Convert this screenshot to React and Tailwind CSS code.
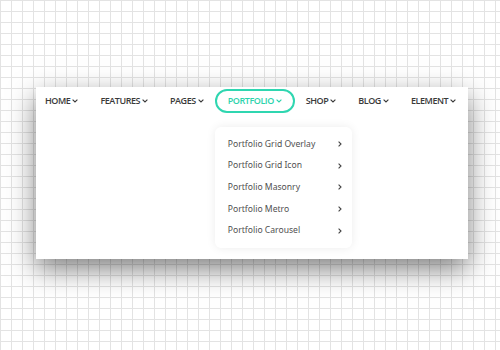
import React from "react";

const Down = ({ color = "#3a3a3a" }) => (
  <svg width="6" height="4" viewBox="0 0 6 4" className="ml-[2px] mt-[1px]">
    <path d="M0.6 0.6 L3 3 L5.4 0.6" fill="none" stroke={color} strokeWidth="1.1" />
  </svg>
);

const Right = () => (
  <svg width="4" height="6" viewBox="0 0 4 6">
    <path d="M0.6 0.6 L3 3 L0.6 5.4" fill="none" stroke="#444" strokeWidth="1.1" />
  </svg>
);

const items = ["HOME", "FEATURES", "PAGES", "PORTFOLIO", "SHOP", "BLOG", "ELEMENT"];
const sub = [
  "Portfolio Grid Overlay",
  "Portfolio Grid Icon",
  "Portfolio Masonry",
  "Portfolio Metro",
  "Portfolio Carousel",
];

export default function App() {
  return (
    <div className="w-[500px] h-[350px] overflow-hidden bg-white bg-[linear-gradient(to_right,#e3e3e3_1px,transparent_1px),linear-gradient(to_bottom,#e3e3e3_1px,transparent_1px)] bg-[size:11px_11px] pt-[87px] pl-[36px] font-['Open_Sans',sans-serif]">
      <div className="w-[432px] h-[172px] bg-white shadow-[0_10px_26px_rgba(0,0,0,0.5)]">
        <nav className="flex items-center h-[26px] pt-[1px] ml-[-2px]">
          {items.map((it) => {
            const active = it === "PORTFOLIO";
            return (
              <div key={it} className="relative">
                <div
                  className={
                    "flex items-center h-[24px] px-[11px] text-[9px] font-semibold leading-none tracking-[-0.45px] " +
                    (active
                      ? "border-2 border-[#2fd6b0] rounded-full text-[#2cd3ac] px-[9px]"
                      : "text-[#3a3a3a]")
                  }
                >
                  {it}
                  <Down color={active ? "#2cd3ac" : "#3a3a3a"} />
                </div>
                {active && (
                  <div className="absolute left-0 top-[38px] w-[137px] h-[121px] bg-white rounded-md shadow-[0_0_10px_rgba(0,0,0,0.08)] pt-[7px] pl-[13px] pr-[10px] font-['Noto_Sans',sans-serif]">
                    {sub.map((s) => (
                      <div key={s} className="flex items-center justify-between h-[21.6px] text-[8.6px] text-[#505050]">
                        <span>{s}</span>
                        <Right />
                      </div>
                    ))}
                  </div>
                )}
              </div>
            );
          })}
        </nav>
      </div>
    </div>
  );
}
